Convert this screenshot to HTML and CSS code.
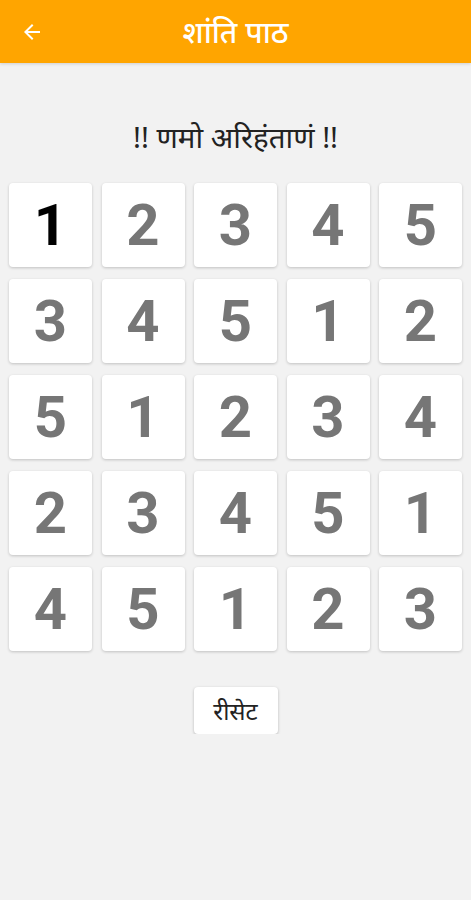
FILE: index.html
```html
<!DOCTYPE html>
<html lang="hi">
<head>
    <meta charset="UTF-8">
    <meta name="viewport" content="width=device-width, initial-scale=1.0">
    <title>शांति पाठ</title>
    <link rel="stylesheet" href="styles.css">
</head>
<body>
    <header class="topbar">
        <button class="back-btn" aria-label="back">
            <svg width="24" height="24" viewBox="0 0 24 24"><path d="M20 11H7.83l5.59-5.59L12 4l-8 8 8 8 1.41-1.41L7.83 13H20v-2z" fill="#fff"/></svg>
        </button>
        <h1 class="title">शांति पाठ</h1>
    </header>
    <main class="content">
        <p class="mantra">!! णमो अरिहंताणं !!</p>
        <div class="grid" id="grid"></div>
        <button class="reset-btn" id="reset-btn">रीसेट</button>
    </main>

    <script>
// Board data
const rows = [
  [1, 2, 3, 4, 5],
  [3, 4, 5, 1, 2],
  [5, 1, 2, 3, 4],
  [2, 3, 4, 5, 1],
  [4, 5, 1, 2, 3]
];

const grid = document.getElementById('grid');
let current = 0;

function renderGrid() {
  grid.innerHTML = '';
  rows.flat().forEach((num, index) => {
    const cls = index === current ? 'cell active' : 'cell';
    grid.insertAdjacentHTML('beforeend', `<div class="${cls}">${num}</div>`);
  });
}

grid.addEventListener('click', () => {
  current = Math.min(current + 1, 24);
  renderGrid();
});

document.getElementById('reset-btn').addEventListener('click', () => {
  current = 0;
  renderGrid();
});

renderGrid();
    </script>
</body>
</html>
```

FILE: styles.css
```css
body {
    margin: 0;
    background-color: #f2f2f2;
    font-family: "Noto Sans", Roboto, sans-serif;
    color: #222;
}

.topbar {
    height: 63px;
    background-color: #ffa500;
    display: flex;
    align-items: center;
    justify-content: center;
    position: relative;
    box-shadow: 0 1px 3px rgba(0, 0, 0, 0.15);
}

.back-btn {
    position: absolute;
    left: 20px;
    top: 20px;
    background: none;
    border: none;
    padding: 0;
    line-height: 0;
    cursor: pointer;
}

.title {
    margin: 0;
    color: #fff;
    font-size: 30px;
    font-weight: 500;
}

.content {
    display: flex;
    flex-direction: column;
    align-items: center;
}

.mantra {
    margin: 50px 0 0;
    height: 48px;
    font-size: 29.5px;
    font-weight: 400;
    line-height: 48px;
    color: #222;
}

.grid {
    margin-top: 22px;
    display: grid;
    grid-template-columns: repeat(5, 83px);
    grid-auto-rows: 84px;
    column-gap: 9.5px;
    row-gap: 12px;
}

.cell {
    background-color: #fff;
    border-radius: 4px;
    box-shadow: 0 1px 3px rgba(0, 0, 0, 0.2);
    display: flex;
    align-items: center;
    justify-content: center;
    font-family: Roboto, "Liberation Sans", sans-serif;
    font-weight: bold;
    font-size: 58px;
    color: #767676;
}

.cell.active {
    color: #000;
}

.reset-btn {
    margin-top: 36px;
    width: 84px;
    height: 47px;
    background-color: #fff;
    border: none;
    border-radius: 4px;
    box-shadow: 0 1px 3px rgba(0, 0, 0, 0.25);
    font-family: "Noto Sans", sans-serif;
    font-size: 24px;
    color: #222;
    cursor: pointer;
}
```
